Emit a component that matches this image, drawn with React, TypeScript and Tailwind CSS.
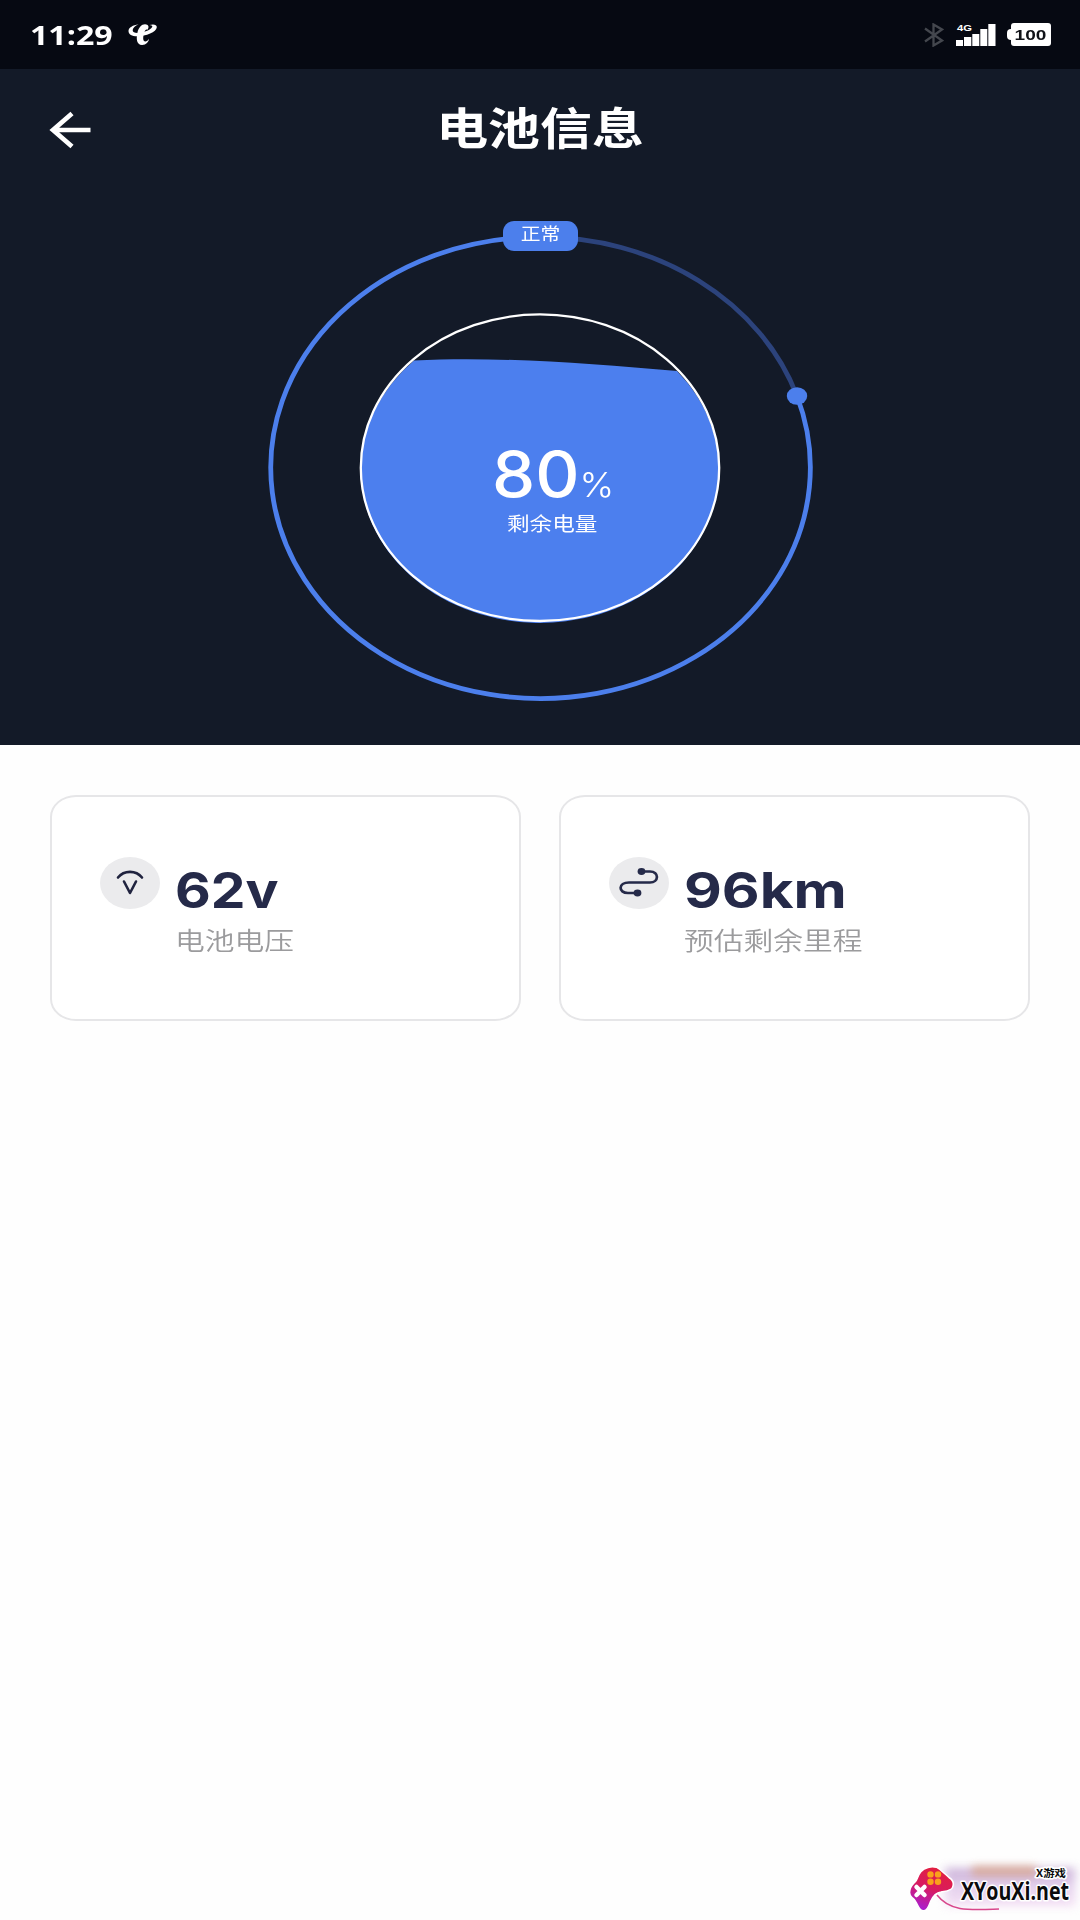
import type { ReactNode } from "react";

const cjk = "font-['Noto_Sans_CJK_SC',sans-serif]";

function TelecomIcon() {
    return (
        <svg className="w-[30px] h-[22px]" viewBox="0 0 30 22" fill="#fff">
            <path d="M10.500.500C5 1 .500 3.500.500 7c0 3.500 3.500 5.300 8.500 5.300 9 0 19.500-4.300 19.800-9C29 .500 25.500-.200 21.500 1c2.500.200 3.300 1 2.500 2.300C22.500 6 15.500 9 9.500 9 6.300 9 4.500 8 4.700 6 4.900 4 7 1.700 10.500.500Z" />
            <path d="M19.500 5.800C21.500 3 20.500.200 17 .200c-3.500 0-6.300 3.300-7.500 8C8 14.500 8.500 20.800 14 20.900c4 .1 6.800-3 7-6.200-1.200 2-2.600 2.900-4 2.700-2.600-.4-2-5.400-.6-9.200C17.200 6 18 5 19.500 5.800Z" />
        </svg>
    )
}

function StatusBar() {
    return (
        <div className="h-[69px] bg-[#060912] flex justify-between items-start text-white">
            <div className="flex items-start pl-[30px] pt-[24px] gap-[15px]">
                <span className="w-[83px] h-[22px] leading-[22px] text-[27px] font-bold font-['Open_Sans',sans-serif] whitespace-nowrap origin-left scale-x-[1.19]">
                    11:29
                </span>
                <TelecomIcon />
            </div>

            <div className="flex items-start pt-[23px] pr-[29px]">
                <svg className="w-[20px] h-[24px] mr-3" viewBox="0 0 20 24" fill="none" stroke="#44474e" strokeWidth="2.300">
                    <path d="M1 5.500 18 17.500 9.500 22.500V1.500L18 6.500 1 18.500" />
                </svg>
                <svg className="w-[40px] h-[24px] mr-[11px]" viewBox="0 0 40 24" fill="#fff">
                    <path d="M0 17h7v6H0zM8 14h7.300v9H8zM16.300 11h7v12h-7zM24.300 6h7v17h-7zM32.300 1h7.200v22h-7.200z" />
                    <text x="1" y="8" fontSize="9" fontWeight="700" fontFamily="Liberation Sans" textLength="15" lengthAdjust="spacingAndGlyphs">4G</text>
                </svg>
                <div className="flex items-center">
                    <span className="w-1 h-[11px] bg-white rounded-l-sm" />
                    <span className="w-[40px] h-[23px] bg-white rounded-[3px] flex items-center justify-center text-[#101217] text-[15px] font-bold font-['Liberation_Sans',sans-serif]">
                        <span className="mt-px scale-x-[1.27]">100</span>
                    </span>
                </div>
            </div>
        </div>
    )
}

function Header() {
    return (
        <div className="h-[131px] grid grid-cols-[1fr_auto_1fr] items-start">
            <svg className="w-[42px] h-[38px] ml-[49px] mt-[42px]" viewBox="0 0 42 38" fill="none" stroke="#fff" strokeWidth="4.700">
                <path d="M23 2.500 4 19l19 16.500M4 19h37.500" />
            </svg>
            <h1 className={`${cjk} mt-[29px] h-[56px] leading-[56px] text-[44px] font-bold text-white scale-x-[1.18]`}>电池信息</h1>
        </div>
    )
}

function Gauge() {
    return (
        <div className="relative w-[600px] h-[520px] mx-auto">
            <svg className="w-[600px] h-[520px]" viewBox="240 200 600 520" fill="none">
                <path d="M540 236.900A269.800 230.800 0 0 1 797 396" stroke="#2c437c" strokeWidth="4.800" />
                <path d="M797 396A269.800 230.800 0 1 1 540 236.900" stroke="#4c7fec" strokeWidth="4.800" />
                <ellipse cx="797" cy="396" rx="10.200" ry="8.800" fill="#4c7fec" />
                <path d="M414 360.500C500 356 590 364 677 371A179.200 153.300 0 1 1 414 360.500Z" fill="#4c7fee" />
                <ellipse cx="540" cy="467.700" rx="179.200" ry="153.300" stroke="#fff" strokeWidth="2.300" />
            </svg>

            <div className={`${cjk} absolute left-[262.500px] top-[21px] w-[75px] h-[30px] rounded-[11px] bg-[#4c7fec] text-white text-[17.500px] leading-[23px] text-center`}>
                <span className="inline-block scale-x-[1.13]">正常</span>
            </div>

            <div className="absolute left-[252px] top-[247px] w-[120px] flex flex-col text-white">
                <div className="flex items-baseline h-[54px] leading-[54px] font-['Inter',sans-serif] origin-left scale-x-[1.090]">
                    <span className="text-[63px] font-medium">80</span>
                    <span className="text-[34px] font-light">%</span>
                </div>
                <span className={`${cjk} ml-[15px] mt-[8px] h-[28px] text-[19.500px] leading-[28px] origin-left scale-x-[1.16]`}>剩余电量</span>
            </div>
        </div>
    )
}

interface StatCardProps {
    icon: ReactNode;
    value: ReactNode;
    label: string;
}

function StatCard({ icon, value, label }: StatCardProps) {
    return (
        <div className="h-[226px] rounded-[26px/22px] border-2 border-[#e6e6e8] bg-white flex pl-[48px] pt-[60px]">
            <div className="w-[60px] h-[52px] rounded-[50%] bg-[#ebebed] shrink-0">{icon}</div>
            <div className="flex flex-col ml-[15px]">
                <span className="mt-[8px] h-[52px] leading-[52px] text-[49px] font-bold text-[#252a49] font-['Inter',sans-serif] whitespace-nowrap">{value}</span>
                <span className={`${cjk} mt-[3px] h-[38px] leading-[38px] text-[25px] font-[350] text-[#9b9b9d] whitespace-nowrap origin-left scale-x-[1.19]`}>{label}</span>
            </div>
        </div>
    )
}

function VoltageIcon() {
    return (
        <svg className="w-[60px] h-[52px]" viewBox="0 0 60 52" fill="none" stroke="#20233f" strokeWidth="2.600" strokeLinecap="round" strokeLinejoin="round">
            <path d="M18 20.500C24 13 36 13 42 20.500M24 24.500 30 36l6-11.500" />
        </svg>
    )
}

function RouteIcon() {
    return (
        <svg className="w-[60px] h-[52px]" viewBox="0 0 60 52" fill="none" stroke="#252a49" strokeWidth="2.700">
            <path d="M33 14.500H41C50.500 14.500 50 25.500 41 25.500H20C9 25.500 9 36 19 36H28" />
            <ellipse cx="32.500" cy="14.500" rx="3.900" ry="3.400" fill="#252a49" stroke="none" />
            <ellipse cx="28.500" cy="36" rx="3.900" ry="3.400" fill="#252a49" stroke="none" />
        </svg>
    )
}

function Watermark() {
    return (
        <div className="relative w-[170px] h-[60px]">
            <div className="absolute left-[35px] top-[8px] w-[130px] h-[38px] bg-linear-to-b from-[#b08bc4] via-[#dcc2e8] to-[#f0d2f0] opacity-70 blur-[5px]" />
            <div className="absolute left-[62px] top-[6px] w-[64px] h-[10px] bg-[#d99a6c] opacity-60 blur-[4px]" />
            <svg className="absolute left-0 top-0 w-[170px] h-[60px]" viewBox="0 0 170 60">
                <defs>
                    <linearGradient id="pad" x1="0.700" y1="0" x2="0.300" y2="1">
                        <stop offset="0" stopColor="#e3203c" />
                        <stop offset="0.500" stopColor="#d81b60" />
                        <stop offset="1" stopColor="#a81fd6" />
                    </linearGradient>
                </defs>
                <path d="M27 35C40 52 60 50 89 49" fill="none" stroke="#d8478c" strokeWidth="1.500" />
                <path d="M19 7.500C23 6.500 28 6.800 31 9.500 34 12.500 37 14.500 40 17.500 44 20 45 24 43.500 27.500 42 31 37 31 32 32 27 32.500 24 36 21.500 41.500 20 45 19 50.500 15 50.800 11.500 51 10 48 8 44 6.500 41 6 39.500 3.500 38 .500 36 0 32 1.500 28 3 24.500 5.500 23 7.500 20 9.500 16 11 9.500 19 7.500Z" transform="translate(-1 0)" fill="url(#pad)" stroke="#fff" strokeWidth="1.500" />
                <path d="m6.500 27 8 8m0-8-8 8" stroke="#fff" strokeWidth="4.500" strokeLinecap="round" />
                <g fill="#f9a11b">
                    <circle cx="20.500" cy="14.400" r="3.200" />
                    <circle cx="28" cy="14.400" r="3.200" />
                    <circle cx="20.500" cy="21.800" r="3.200" />
                    <circle cx="28" cy="21.800" r="3.200" />
                </g>
                <g fill="#0b0b0d" stroke="#fff" strokeWidth="3" strokeLinejoin="round" paintOrder="stroke" fontWeight="700">
                    <text x="51" y="40" fontSize="24.500" fontFamily="Open Sans" textLength="108" lengthAdjust="spacingAndGlyphs">XYouXi.net</text>
                    <text x="126" y="17" fontSize="10" fontFamily="Noto Sans CJK SC" textLength="30" lengthAdjust="spacingAndGlyphs">X游戏</text>
                </g>
            </svg>
        </div>
    )
}

export default function App() {
    return (
        <main className="w-[1080px] h-[1920px] bg-[#fefefe] flex flex-col overflow-hidden">
            <section className="h-[745px] bg-[#131a28]">
                <StatusBar />
                <Header />
                <Gauge />
            </section>

            <section className="grid grid-cols-[471px_471px] gap-[38px] pl-[50px] pt-[50px]">
                <StatCard
                    icon={<VoltageIcon />}
                    value={<span className="inline-block origin-left scale-x-[1.125]">62v</span>}
                    label="电池电压"
                />
                <StatCard
                    icon={<RouteIcon />}
                    value={<span className="inline-block origin-left scale-x-[1.190]">96km</span>}
                    label="预估剩余里程"
                />
            </section>

            <footer className="mt-auto flex justify-end">
                <Watermark />
            </footer>
        </main>
    )
}
